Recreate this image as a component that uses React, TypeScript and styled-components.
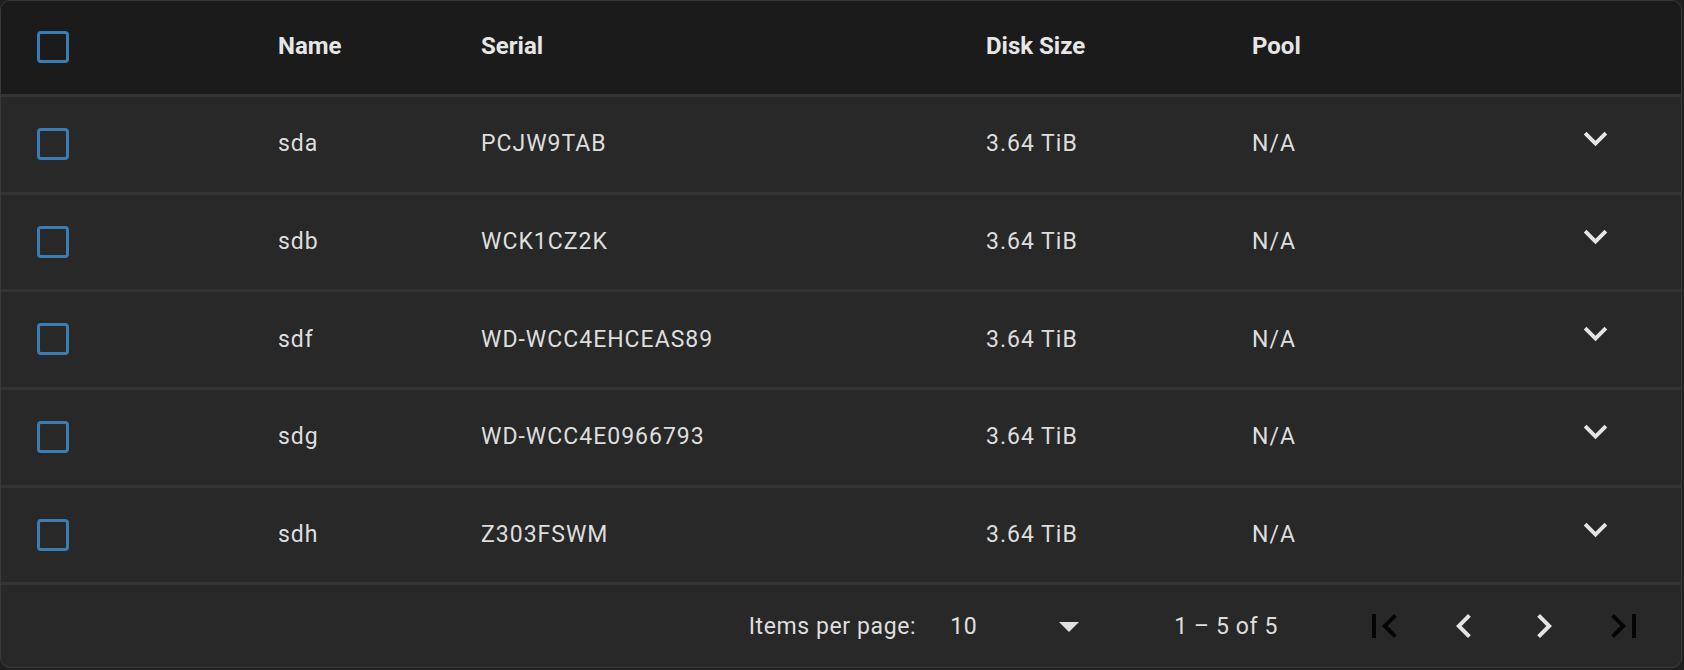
import styled, { createGlobalStyle } from "styled-components";
import {
  MdExpandMore,
  MdFirstPage,
  MdChevronLeft,
  MdChevronRight,
  MdLastPage,
  MdArrowDropDown,
} from "react-icons/md";

const GlobalStyle = createGlobalStyle`
  html, body {
    margin: 0;
    padding: 0;
    background: #1f1f1f;
  }
  body {
    font-family: Roboto, "Liberation Sans", sans-serif;
    color: #e0e0e0;
  }
`;

const Card = styled.div`
  width: 1682px;
  height: 668px;
  box-sizing: border-box;
  border: 1px solid #3a3a3a;
  border-radius: 10px;
  overflow: hidden;
  background: #282828;
  display: flex;
  flex-direction: column;
`;

const Grid = styled.div`
  display: grid;
  grid-template-columns: 277px 203px 505px 266px 320px 47px 1fr;
  align-items: center;
  flex-shrink: 0;
`;

const HeaderRow = styled(Grid)`
  height: 93px;
  background: #1b1b1b;
  border-bottom: 3px solid #343434;
`;

const Row = styled(Grid)`
  height: 94.7px;
  border-bottom: 3px solid #343434;
`;

const HeadCell = styled.div`
  font-size: 24px;
  font-weight: 700;
  color: #e6e6e6;
  margin-bottom: 4px;
`;

const Cell = styled.div`
  font-size: 23px;
  letter-spacing: 1px;
  color: #dedede;
  margin-bottom: 1px;
`;

const CheckCell = styled.div`
  padding-left: 36px;
  display: flex;
  align-items: center;
  margin-bottom: 1px;
`;

const Checkbox = styled.div`
  width: 32px;
  height: 32px;
  box-sizing: border-box;
  border: 3.5px solid #3a7db5;
  border-radius: 4px;
`;

const ExpandButton = styled.div`
  display: flex;
  color: #e4e4e4;
  margin-bottom: 12px;
`;

const Footer = styled.div`
  flex: 1;
  display: flex;
  align-items: center;
  justify-content: flex-end;
  padding-right: 17px;
  font-size: 23px;
  letter-spacing: 0.6px;
  color: #dedede;
`;

const PageSelect = styled.div`
  margin-left: 34px;
  width: 143px;
  display: flex;
  align-items: center;
  justify-content: space-between;
  color: #e0e0e0;
`;

const RangeLabel = styled.div`
  margin-left: 81px;
  margin-right: 66px;
`;

const NavButton = styled.div<{ $disabled?: boolean }>`
  width: 80px;
  display: flex;
  justify-content: center;
  color: ${(p) => (p.$disabled ? "#050505" : "#e4e4e4")};
`;

const disks = [
  { name: "sda", serial: "PCJW9TAB" },
  { name: "sdb", serial: "WCK1CZ2K" },
  { name: "sdf", serial: "WD-WCC4EHCEAS89" },
  { name: "sdg", serial: "WD-WCC4E0966793" },
  { name: "sdh", serial: "Z303FSWM" },
];

export default function App() {
  return (
    <>
      <GlobalStyle />
      <Card>
        <HeaderRow>
          <CheckCell>
            <Checkbox />
          </CheckCell>
          <HeadCell>Name</HeadCell>
          <HeadCell>Serial</HeadCell>
          <HeadCell>Disk Size</HeadCell>
          <HeadCell>Pool</HeadCell>
          <div />
          <div />
        </HeaderRow>
        {disks.map((d) => (
          <Row key={d.name}>
            <CheckCell>
              <Checkbox />
            </CheckCell>
            <Cell>{d.name}</Cell>
            <Cell>{d.serial}</Cell>
            <Cell>3.64 TiB</Cell>
            <Cell>N/A</Cell>
            <ExpandButton>
              <MdExpandMore size={47} />
            </ExpandButton>
            <div />
          </Row>
        ))}
        <Footer>
          <span>Items per page:</span>
          <PageSelect>
            <span>10</span>
            <MdArrowDropDown size={48} />
          </PageSelect>
          <RangeLabel>1 – 5 of 5</RangeLabel>
          <NavButton $disabled>
            <MdFirstPage size={48} />
          </NavButton>
          <NavButton>
            <MdChevronLeft size={48} />
          </NavButton>
          <NavButton>
            <MdChevronRight size={48} />
          </NavButton>
          <NavButton $disabled>
            <MdLastPage size={48} />
          </NavButton>
        </Footer>
      </Card>
    </>
  );
}
